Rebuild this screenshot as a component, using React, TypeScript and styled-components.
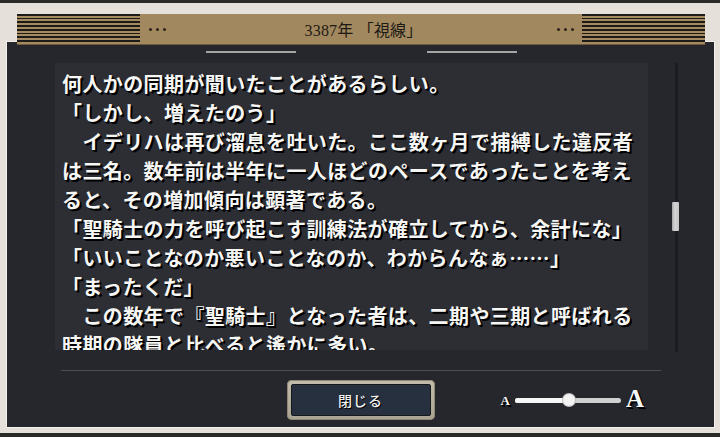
import React from 'react';
import styled, { createGlobalStyle } from 'styled-components';

const GlobalStyle = createGlobalStyle`
  html, body {
    margin: 0;
    padding: 0;
    background: #2a2a2b;
  }
  body {
    font-family: "Liberation Serif", "Noto Sans CJK JP", serif;
  }
  * {
    box-sizing: border-box;
  }
`;

const LINES = [
  '何人かの同期が聞いたことがあるらしい。',
  '「しかし、増えたのう」',
  '　イデリハは再び溜息を吐いた。ここ数ヶ月で捕縛した違反者',
  'は三名。数年前は半年に一人ほどのペースであったことを考え',
  'ると、その増加傾向は顕著である。',
  '「聖騎士の力を呼び起こす訓練法が確立してから、余計にな」',
  '「いいことなのか悪いことなのか、わからんなぁ……」',
  '「まったくだ」',
  '　この数年で『聖騎士』となった者は、二期や三期と呼ばれる',
  '時期の隊員と比べると遙かに多い。',
];

export default function App() {
  const fontLevel = 0.51;

  return (
    <>
      <GlobalStyle />
      <Frame>
        <Header>
          <Stripes />
          <Dots>
            <Dot />
            <Dot />
            <Dot />
          </Dots>
          <Title>3387年 「視線」</Title>
          <Dots $right>
            <Dot />
            <Dot />
            <Dot />
          </Dots>
          <Stripes />
        </Header>
        <Panel>
          <Marks>
            <Mark />
            <Mark />
          </Marks>
          <ScrollRow>
            <TextBox>
              {LINES.map((line, i) => (
                <Line key={i}>{line}</Line>
              ))}
            </TextBox>
            <Track>
              <Thumb />
            </Track>
          </ScrollRow>
          <Divider />
          <Footer>
            <span />
            <CloseButton>
              <CloseInner>閉じる</CloseInner>
            </CloseButton>
            <SizeControl>
              <SizeLetter $big={false}>A</SizeLetter>
              <Slider>
                <SliderFill style={{ width: `${fontLevel * 100}%` }} />
                <SliderKnob style={{ left: `${fontLevel * 100}%` }} />
              </Slider>
              <SizeLetter $big>A</SizeLetter>
            </SizeControl>
          </Footer>
        </Panel>
      </Frame>
    </>
  );
}

const Frame = styled.div`
  margin-top: 3px;
  height: 430px;
  padding: 11px 5px 5px 6px;
  background: #e6e0da;
  display: flex;
  flex-direction: column;
`;

const Header = styled.div`
  position: relative;
  z-index: 1;
  display: flex;
  align-items: center;
  margin-left: 11px;
  width: 688px;
  height: 30px;
  background: #a2885e;
  box-shadow: 0 1px 0 #6d5b3e;
`;

const Stripes = styled.div`
  width: 123px;
  height: 100%;
  background: repeating-linear-gradient(
    to bottom,
    #1d1b18 0 1.6px,
    #a68b60 1.6px 3.75px
  );
`;

const Dots = styled.div<{ $right?: boolean }>`
  display: flex;
  gap: 4px;
  margin: ${(p) => (p.$right ? '0 8px 0 0' : '0 0 0 9px')};
`;

const Dot = styled.span`
  width: 3px;
  height: 3px;
  border-radius: 50%;
  background: #2a241c;
`;

const Title = styled.div`
  flex: 1;
  text-align: center;
  padding-left: 4px;
  font-family: "Liberation Serif", "Noto Sans CJK JP", serif;
  font-size: 16px;
  color: #1d1a15;
  letter-spacing: 0.2px;
`;

const Panel = styled.div`
  margin-top: -3px;
  height: 387px;
  border: 1px solid #f3f0ec;
  background: #26272c;
  display: flex;
  flex-direction: column;
`;

const Marks = styled.div`
  display: flex;
  justify-content: center;
  gap: 131px;
  margin-top: 9px;
  padding-left: 1px;
`;

const Mark = styled.span`
  width: 90px;
  height: 2px;
  background: #a4a4a4;
`;

const ScrollRow = styled.div`
  display: flex;
  margin-top: 10px;
  padding-left: 48px;
  height: 289px;
`;

const TextBox = styled.div`
  width: 593px;
  height: 287px;
  overflow: hidden;
  padding: 6px 0 0 7px;
  background: #2d2e34;
`;

const Line = styled.div`
  white-space: pre;
  font-family: "Noto Sans CJK JP", sans-serif;
  font-weight: 700;
  font-size: 20px;
  letter-spacing: 0.4px;
  line-height: 29px;
  color: #f6f6f4;
  text-shadow: 2px 2px 0 #000, 1px 1px 1px #000;
`;

const Track = styled.div`
  position: relative;
  width: 3px;
  margin-left: 27px;
  height: 100%;
  background: #1b1c20;
`;

const Thumb = styled.div`
  position: absolute;
  top: 139px;
  left: -3px;
  width: 7px;
  height: 29px;
  border-radius: 1px;
  background: linear-gradient(to right, #a8a8a8, #d4d4d4 40%, #c6c6c6);
`;

const Divider = styled.div`
  margin: 18px 0 0 54px;
  width: 600px;
  height: 1px;
  background: #4c4e56;
`;

const Footer = styled.div`
  display: grid;
  grid-template-columns: 1fr auto 1fr;
  align-items: center;
  margin-top: 9px;
  height: 40px;
`;

const CloseButton = styled.div`
  width: 148px;
  height: 40px;
  padding: 4px;
  border-radius: 5px;
  background: linear-gradient(to bottom, #c2bcab, #a9a392);
  box-shadow: inset 0 0 0 1px #8e8878;
`;

const CloseInner = styled.div`
  height: 100%;
  display: flex;
  align-items: center;
  justify-content: center;
  border: 1px solid #15181e;
  border-radius: 2px;
  background: #27303e;
  font-family: "Noto Sans CJK JP", sans-serif;
  font-size: 14px;
  font-weight: 500;
  letter-spacing: 1px;
  color: #f2f2f2;
  text-shadow: 1px 1px 0 #000;
`;

const SizeControl = styled.div`
  display: flex;
  align-items: center;
  margin-left: 66px;
  gap: 4px;
`;

const SizeLetter = styled.span<{ $big: boolean }>`
  font-family: "Liberation Serif", serif;
  font-weight: 700;
  font-size: ${(p) => (p.$big ? '25px' : '13px')};
  line-height: 1;
  color: #f8f8f8;
  text-shadow: 1px 1px 0 #000, 2px 2px 0 #000;
  margin-top: ${(p) => (p.$big ? '-4px' : '0')};
`;

const Slider = styled.div`
  position: relative;
  width: 106px;
  height: 5px;
  margin: 0 1px;
  border-radius: 3px;
  background: #d0d0d0;
`;

const SliderFill = styled.div`
  height: 100%;
  border-radius: 3px;
  background: #f6f6f6;
`;

const SliderKnob = styled.div`
  position: absolute;
  top: 50%;
  width: 12px;
  height: 12px;
  margin: -6px 0 0 -6px;
  border-radius: 50%;
  background: #f3f3f3;
  box-shadow: 0 0 0 1px #bdbdbd;
`;
